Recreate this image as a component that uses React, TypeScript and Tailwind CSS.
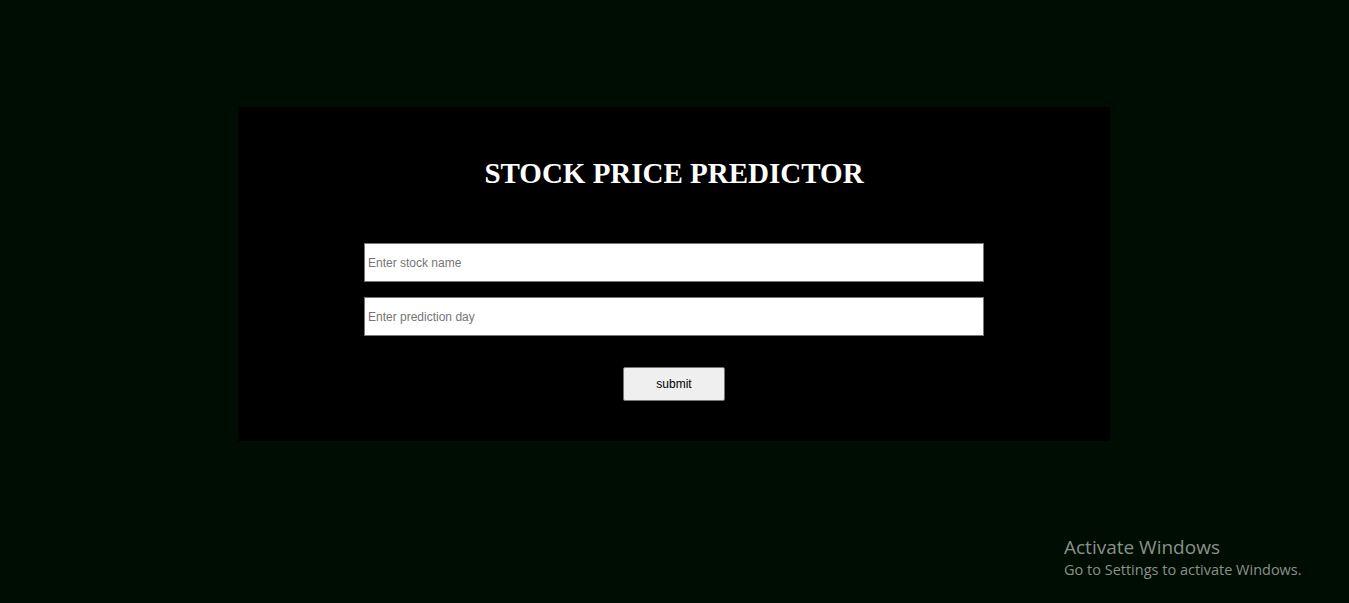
export default function App() {
  return (
    <div className="relative w-full h-[603px] overflow-hidden bg-[#000d02] pt-[107px]">
      <div className="ml-[238px] w-[872px] h-[334px] bg-black flex flex-col items-center pt-[50px]">
        <h1 className="shrink-0 text-white text-[29px] leading-[32px] font-bold font-['Liberation_Serif',serif]">
          STOCK PRICE PREDICTOR
        </h1>
        <div className="shrink-0 mt-[54px] w-[620px] flex flex-col gap-[15px]">
          <input
            type="text"
            placeholder="Enter stock name"
            className="h-[39px] w-full bg-white border border-[#767676] px-[3px] text-[12px] font-['Liberation_Sans',sans-serif] text-black placeholder:text-[#757575] outline-none"
          />
          <input
            type="text"
            placeholder="Enter prediction day"
            className="h-[39px] w-full bg-white border border-[#767676] px-[3px] text-[12px] font-['Liberation_Sans',sans-serif] text-black placeholder:text-[#757575] outline-none"
          />
        </div>
        <button className="shrink-0 mt-[31px] w-[102px] h-[34px] bg-[#efefef] border border-[#767676] rounded-[2px] text-[12px] text-black font-['Liberation_Sans',sans-serif]">
          submit
        </button>
      </div>
      <div className="absolute left-[1064px] top-[535px] text-[#8b908b] font-['Open_Sans',sans-serif]">
        <div className="text-[19px] leading-[24px]">Activate Windows</div>
        <div className="text-[14.5px] leading-[22px]">Go to Settings to activate Windows.</div>
      </div>
    </div>
  );
}
